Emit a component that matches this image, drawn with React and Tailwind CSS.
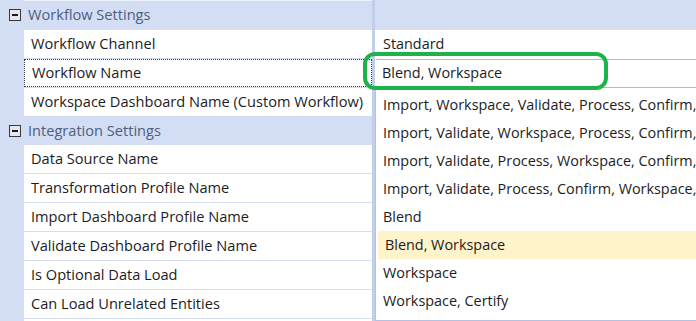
import React from 'react';

const font = { fontFamily: '"Open Sans", "Noto Sans", sans-serif' };

function MinusBox() {
  return (
    <svg width="12" height="12" viewBox="0 0 12 12" className="shrink-0">
      <rect x="0.5" y="0.5" width="11" height="11" fill="#e4e7ee" stroke="#3a3a3a" />
      <rect x="3" y="5" width="6" height="2" fill="#1a1a1a" />
    </svg>
  );
}

function GroupHeader({ title, h }) {
  return (
    <div className={`shrink-0 flex items-center ${h} mb-px`}>
      <div className="w-[24px] flex justify-center pl-[5px]">
        <MinusBox />
      </div>
      <span className="pl-[4px] text-[14.6px] text-[#4e5f82]">{title}</span>
    </div>
  );
}

function LabelRow({ label, focused }) {
  return (
    <div
      className={`shrink-0 ml-[24px] h-[28px] mb-px bg-white flex items-center pl-[7px] text-[14.6px] text-[#1c1c24] whitespace-nowrap ${
        focused ? 'border border-dotted border-[#3a3a3a] pl-[6px]' : ''
      }`}
    >
      {label}
    </div>
  );
}

const options = [
  'Import, Workspace, Validate, Process, Confirm, Certify',
  'Import, Validate, Workspace, Process, Confirm, Certify',
  'Import, Validate, Process, Workspace, Confirm, Certify',
  'Import, Validate, Process, Confirm, Workspace, Certify',
  'Blend',
  'Blend, Workspace',
  'Workspace',
  'Workspace, Certify',
];

export default function App() {
  return (
    <div className="relative w-[696px] h-[321px] overflow-hidden flex bg-[#d3ddf3]" style={font}>
      {/* left: property names */}
      <div className="w-[372px] shrink-0 flex flex-col">
        <div className="shrink-0 ml-[24px] h-px bg-[#eef2fb]" />
        <GroupHeader title="Workflow Settings" h="h-[28px]" />
        <LabelRow label="Workflow Channel" />
        <LabelRow label="Workflow Name" focused />
        <LabelRow label="Workspace Dashboard Name (Custom Workflow)" />
        <GroupHeader title="Integration Settings" h="h-[27px]" />
        <LabelRow label="Data Source Name" />
        <LabelRow label="Transformation Profile Name" />
        <LabelRow label="Import Dashboard Profile Name" />
        <LabelRow label="Validate Dashboard Profile Name" />
        <LabelRow label="Is Optional Data Load" />
        <LabelRow label="Can Load Unrelated Entities" />
        <LabelRow label="" />
      </div>

      {/* splitter */}
      <div className="w-[3px] shrink-0 bg-[#c2cfeb]" />

      {/* right: values */}
      <div className="flex-1 flex flex-col min-w-0">
        <div className="shrink-0 h-[30px] bg-[#d3ddf3]" />
        <div className="shrink-0 h-[28px] bg-white flex items-center pl-[8px] text-[14.4px] text-[#1c1c24]">Standard</div>
        <div className="shrink-0 h-[30px] bg-white flex items-center">
          <div className="flex-1 h-[29px] ml-px border-y border-[#a8bbe6] flex items-center pl-[6px] text-[14.4px] text-[#1c1c24]">
            Blend, Workspace
          </div>
        </div>
        <div className="flex-1 bg-white border-l border-b border-[#b3c2e2] pt-[3px] flex flex-col">
          {options.map((o) => (
            <div
              key={o}
              className={`shrink-0 h-[28px] flex items-center pl-[7px] text-[14.4px] text-[#1c1c24] whitespace-nowrap ${
                o === 'Blend, Workspace' ? 'bg-[#fff3c9] ml-[2px] pl-[5px]' : ''
              }`}
            >
              {o}
            </div>
          ))}
        </div>
      </div>

      {/* annotation */}
      <div className="absolute left-[363px] top-[52px] w-[245px] h-[38px] border-[4px] border-[#1fb14a] rounded-[12px]" />
    </div>
  );
}
